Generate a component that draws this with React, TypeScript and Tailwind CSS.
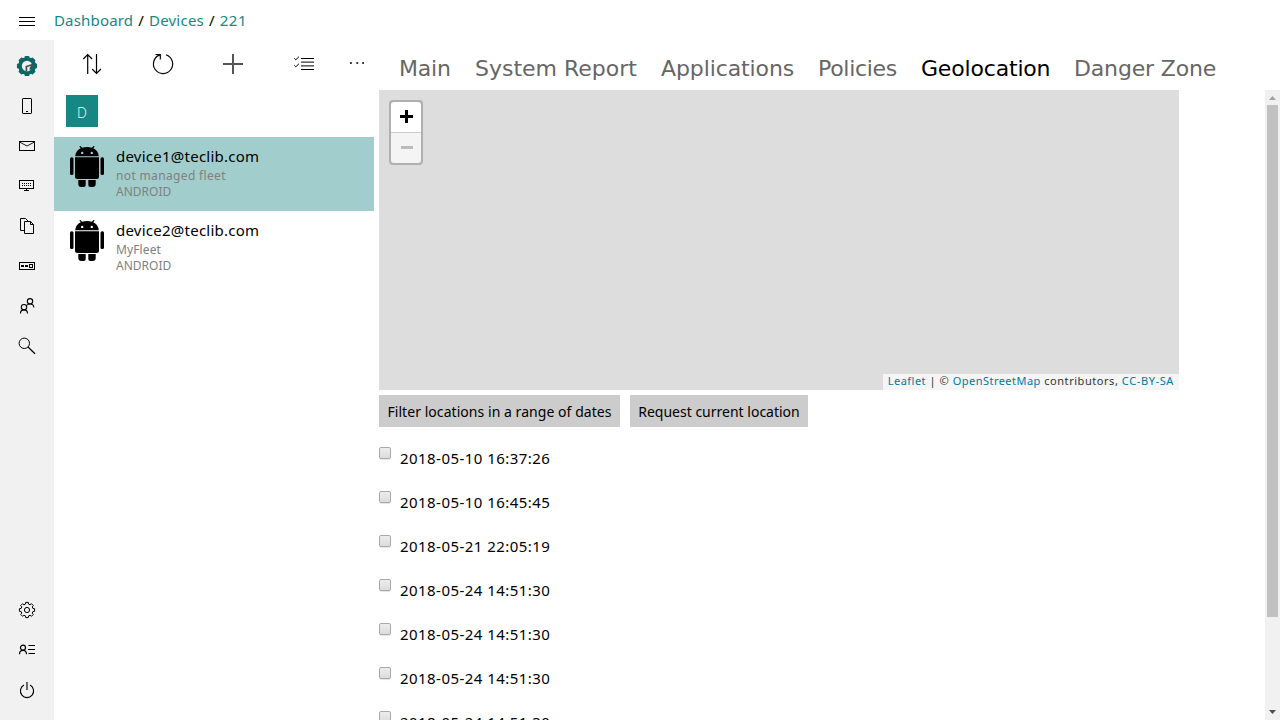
import React from "react";

type IconProps = { children: React.ReactNode };

function Icon({ children }: IconProps) {
  return (
    <svg width="24" height="24" viewBox="0 0 24 24" fill="none" stroke="#000" strokeWidth="1" className="block shrink-0">
      {children}
    </svg>
  );
}

function gearPath(teeth: number, outer: number, inner: number, c: number) {
  const pts: string[] = [];
  const step = (Math.PI * 2) / teeth;
  for (let i = 0; i < teeth; i++) {
    const a = i * step - Math.PI / 2;
    const add = (ang: number, r: number) =>
      pts.push(`${(c + Math.cos(ang) * r).toFixed(2)} ${(c + Math.sin(ang) * r).toFixed(2)}`);
    add(a - step * 0.32, inner);
    add(a - step * 0.22, outer);
    add(a + step * 0.22, outer);
    add(a + step * 0.32, inner);
  }
  return `M${pts.join("L")}Z`;
}

const topIcons: React.ReactNode[] = [
  <>
    <path d={gearPath(8, 9.6, 8.3, 12)} fill="#0c6764" stroke="#0c6764" strokeLinejoin="round" strokeWidth="1.200" />
    <circle cx="12" cy="12" r="5.200" fill="#f1f1f1" stroke="none" />
    <path d="M21 9.500 11.400 12.500V17" stroke="#4a4a4a" strokeWidth="1.700" />
    <path d="M16.500 10.800h1.200v3.500l-2.500 1.800-1-1z" fill="#0c6764" stroke="none" />
  </>,
  <>
    <rect x="7.5" y="4.5" width="9" height="15" rx=".6" />
    <path d="M11 17.5h2" />
  </>,
  <>
    <rect x="4.5" y="7.5" width="15" height="9" />
    <path d="M4.5 8 12 12l7.500-4" strokeWidth=".9" />
  </>,
  <>
    <rect x="4.500" y="6.500" width="14" height="8" />
    <path d="M7 9.500h10M7 11.500h10" strokeDasharray="1 1" />
    <path d="M11.500 15v1.500M9 16.500h5" />
  </>,
  <>
    <path d="M9 16.500H5.500v-12h5l3 3" />
    <path d="M9.500 7.500h6l3 3v9h-9zM15.500 7.500v3h3" />
  </>,
  <>
    <rect x="4.500" y="8.500" width="15" height="7" />
    <path d="M6 12h3M10 12h3" strokeWidth="2" />
    <rect x="14.500" y="10.500" width="3" height="3" />
  </>,
  <>
    <circle cx="15" cy="7.300" r="2.700" strokeWidth="1.100" />
    <circle cx="9" cy="13.200" r="2.700" strokeWidth="1.100" />
    <path d="M5.500 19.500c0-2.500 1.500-3.600 3.500-3.600s3.500 1.100 3.500 3.600M11.500 11.500c.8-1.100 2-1.500 3.500-1.500 2 0 3.700 1.200 3.900 3.500" strokeWidth="1.100" />
  </>,
  <>
    <circle cx="9.300" cy="9.300" r="5.200" />
    <path d="m13 13 7 6.800" strokeWidth="1.200" />
  </>,
];

const bottomIcons: React.ReactNode[] = [
  <>
    <path d={gearPath(8, 7.7, 6.1, 12)} strokeLinejoin="round" strokeWidth="1" />
    <circle cx="12" cy="12" r="2.600" strokeWidth="1" />
  </>,
  <>
    <circle cx="8" cy="9.700" r="2.500" strokeWidth="1.200" />
    <path d="M4.500 16.200c0-2.700 1.500-3.900 3.500-3.900s3.500 1.200 3.500 3.900" strokeWidth="1.200" />
    <path d="M13.500 7.500H20M13 11.500h7M13.500 15.500H20" />
  </>,
  <>
    <path d="M9 7.100a6.600 6.600 0 1 0 6 0" strokeWidth="1.100" />
    <path d="M12 4v8" stroke="#666" strokeWidth="2" />
  </>,
];

function AndroidIcon() {
  return (
    <svg width="34" height="41" viewBox="0 0 34 41" className="block shrink-0">
      <path d="M5.200 10.300C5.500 6.300 7.700 3.700 10.800 2.300L9.300.5l1-.6 1.800 1.900a15 15 0 0 1 9.800 0L23.700-.1l1 .6-1.500 1.800c3.100 1.400 5.300 4 5.600 8zM12.200 5.700a1.200 1.200 0 1 0 0 2.400 1.200 1.200 0 0 0 0-2.400zM21.800 5.700a1.200 1.200 0 1 0 0 2.400 1.200 1.200 0 0 0 0-2.400z" fillRule="evenodd" />
      <path d="M5 11.300h24v19.200a2.500 2.500 0 0 1-2.500 2.500h-19A2.500 2.500 0 0 1 5 30.500z" />
      <rect x="0" y="11.300" width="3.500" height="17.600" rx="1.500" />
      <rect x="30.500" y="11.300" width="3.500" height="17.600" rx="1.500" />
      <path d="M8.300 34h7.400v5a2 2 0 0 1-2 2h-2.400a3 3 0 0 1-3-3zM18.300 34h7.400v4a3 3 0 0 1-3 3h-2.400a2 2 0 0 1-2-2z" />
    </svg>
  );
}

const devices = [
  { name: "device1@teclib.com", fleet: "not managed fleet", selected: true },
  { name: "device2@teclib.com", fleet: "MyFleet", selected: false },
];

const tabs = [
  { label: "Main", style: "w-[52px] tracking-[-0.2px]" },
  { label: "System Report", style: "w-[162px]" },
  { label: "Applications", style: "w-[133px] tracking-[-0.1px]" },
  { label: "Policies", style: "w-[79px] tracking-[-0.3px]" },
  { label: "Geolocation", style: "w-[129px] tracking-[-0.18px] text-black" },
  { label: "Danger Zone", style: "w-[142px] tracking-[-0.16px]" },
];

const locations = [
  "2018-05-10 16:37:26",
  "2018-05-10 16:45:45",
  "2018-05-21 22:05:19",
  "2018-05-24 14:51:30",
  "2018-05-24 14:51:30",
  "2018-05-24 14:51:30",
  "2018-05-24 14:51:30",
];

export default function App() {
  return (
    <div className="flex h-[720px] w-[1280px] flex-col overflow-hidden bg-white font-['Noto_Sans',sans-serif] text-[15px] text-black">
      <header className="flex h-10 shrink-0 items-center">
        <div className="flex w-[54px] justify-center pt-1">
          <Icon><path d="M4 7.500h16M4 11.500h16M4 15.500h16" /></Icon>
        </div>
        <nav className="flex leading-5 whitespace-pre">
          <a className="tracking-[0.17px] text-[#158884]">Dashboard</a>
          <span className="w-[15.800px] text-center"> / </span>
          <a className="tracking-[0.22px] text-[#158884]">Devices</a>
          <span className="w-[15.800px] text-center"> / </span>
          <a className="tracking-[0.5px] text-[#158884]">221</a>
        </nav>
      </header>
      <div className="flex min-h-0 flex-1">
        <aside className="flex w-[54px] shrink-0 flex-col justify-between bg-[#f1f1f1] pt-1.5 pb-2.5">
          <div>
            {topIcons.map((icon, i) => (
              <div key={i} className="flex h-10 items-center justify-center"><Icon>{icon}</Icon></div>
            ))}
          </div>
          <div>
            {bottomIcons.map((icon, i) => (
              <div key={i} className="flex h-10 items-center justify-center"><Icon>{icon}</Icon></div>
            ))}
          </div>
        </aside>
        <section className="w-80 shrink-0">
          <div className="flex h-12 items-center pl-[26px]">
            <Icon>
              <path d="M7.700 22V2.500M3.300 7l4.400-4.400L12.100 7M16.500 2v19.500M12.100 17l4.400 4.400 4.400-4.400" strokeWidth="1.200" />
            </Icon>
            <div className="w-[47px]" />
            <Icon>
              <path d="M15 2.800a9.600 9.600 0 1 1-6.200.1M4.500 2.500h4.800v5" strokeWidth="1.200" />
            </Icon>
            <div className="w-[46px]" />
            <Icon><path d="M2 12h20M12 2v20" stroke="#555" strokeWidth="2" /></Icon>
            <div className="w-[47px]" />
            <Icon>
              <path d="M9 6.500h13M9 17.500h13" />
              <path d="M9 10.200h13M9 13.800h13" stroke="#333" strokeWidth="1.300" />
              <path d="m2.300 6.300 1.500 1.500L7 4.700M2.300 13.300l1.500 1.500L7 11.700" />
            </Icon>
            <div className="w-[29px]" />
            <Icon><path d="M5 11h1.800M11.400 11h1.800M17.200 11H19" strokeWidth="1.800" stroke="#333" /></Icon>
          </div>
          <div className="mt-[7px] mb-2.5 ml-3 flex size-8 items-center justify-center bg-[#158884] pt-0.5 font-['Open_Sans',sans-serif] text-[14px] font-light text-white">D</div>
          {devices.map((d) => (
            <div key={d.name} className={d.selected ? "flex h-[74px] bg-[#a1cecc] pt-[9px] pl-4" : "flex h-[74px] pt-[9px] pl-4"}>
              <AndroidIcon />
              <div className="ml-3 flex flex-col items-start">
                <span className="leading-5 tracking-[0.24px]">{d.name}</span>
                <span className={d.selected ? "mt-0.5 text-[12px] leading-4 tracking-[0.35px] text-[#808080]" : "mt-0.5 text-[12px] leading-4 tracking-[0.12px] text-[#808080]"}>{d.fleet}</span>
                <span className="text-[12px] leading-4 text-[#808080]">ANDROID</span>
              </div>
            </div>
          ))}
        </section>
        <main className="ml-[5px] flex min-w-0 flex-1 flex-col">
          <div className="flex h-[50px] shrink-0 items-center gap-6 pt-1.5 pl-5 font-['DejaVu_Sans',sans-serif] text-[22px] whitespace-nowrap text-[#666]">
            {tabs.map((t) => (
              <span key={t.label} className={t.style}>{t.label}</span>
            ))}
          </div>
          <div className="flex min-h-0 flex-1 justify-between">
            <div className="min-w-0 overflow-hidden">
              <div className="flex h-[300px] w-[800px] flex-col items-start justify-between bg-[#ddd]">
                <div className="mt-2.5 ml-2.5 w-[34px] rounded border-2 border-[#b0b0b0]">
                  <div className="flex h-[31px] items-center justify-center rounded-t-sm border-b border-[#ccc] bg-white">
                    <Icon><path d="M6 11.500h13M12.500 5v13" strokeWidth="3" /></Icon>
                  </div>
                  <div className="flex h-[30px] items-center justify-center rounded-b-sm bg-[#f4f4f4]">
                    <Icon><path d="M7 11.500h12" strokeWidth="3" stroke="#bbb" /></Icon>
                  </div>
                </div>
                <div className="flex h-4 self-end bg-[#f5f5f5] px-[5px] text-[11px] leading-[14px] whitespace-pre text-[#333]">
                  <a className="tracking-[0.47px] text-[#0078a8]">Leaflet</a>
                  <span className="tracking-[0.58px]"> | © </span>
                  <a className="tracking-[0.47px] text-[#0078a8]">OpenStreetMap</a>
                  <span className="tracking-[0.55px]"> contributors, </span>
                  <a className="tracking-[0.62px] text-[#0078a8]">CC-BY-SA</a>
                </div>
              </div>
              <div className="mt-[5px] flex gap-2.5 text-[14px]">
                <button className="flex h-8 w-[241px] items-center justify-center bg-[#ccc] pt-px tracking-[0.05px]">Filter locations in a range of dates</button>
                <button className="flex h-8 w-[178px] items-center justify-center bg-[#ccc] pt-px">Request current location</button>
              </div>
              <div className="mt-5">
                {locations.map((l, i) => (
                  <div key={i} className="flex h-11 items-start">
                    <span className="size-3 rounded-[2px] border border-[#a8a8a8] bg-linear-to-b from-[#ededed] to-[#dcdcdc] shadow-[0_1px_1px_#e4e4e4]" />
                    <span className="mt-px ml-[9px] leading-5 tracking-[0.45px]">{l}</span>
                  </div>
                ))}
              </div>
            </div>
            <div className="flex w-[15px] shrink-0 flex-col items-center justify-between bg-[#f1f1f1]">
              <svg width="15" height="15" className="shrink-0"><path d="M4 10 7.500 6 11 10z" fill="#a3a3a3" /></svg>
              <div className="flex w-[11px] flex-1 flex-col"><div className="h-[512px] bg-[#c1c1c1]" /></div>
              <svg width="15" height="15" className="shrink-0"><path d="M4 5 7.500 9 11 5z" fill="#505050" /></svg>
            </div>
          </div>
        </main>
      </div>
    </div>
  );
}
